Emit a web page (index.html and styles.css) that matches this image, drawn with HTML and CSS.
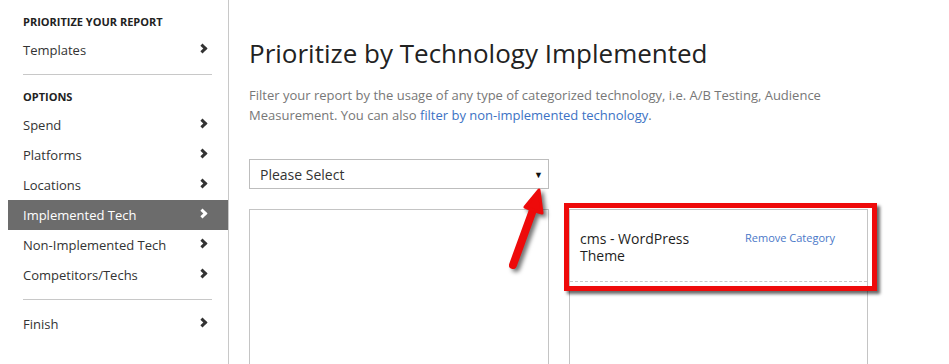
FILE: index.html
```html
<!DOCTYPE html>
<html lang="en">
<head>
    <meta charset="UTF-8">
    <meta name="viewport" content="width=device-width, initial-scale=1.0">
    <title>Prioritize by Technology Implemented</title>
    <link rel="stylesheet" href="styles.css">
</head>
<body>
    <div class="page">
        <div class="sidebar">
            <div class="side-title">PRIORITIZE YOUR REPORT</div>
            <ul class="side-nav">
                <li><span>Templates</span><i class="chev"></i></li>
            </ul>
            <hr class="side-line">
            <div class="side-title">OPTIONS</div>
            <ul class="side-nav">
                <li><span>Spend</span><i class="chev"></i></li>
                <li><span>Platforms</span><i class="chev"></i></li>
                <li><span>Locations</span><i class="chev"></i></li>
                <li class="active"><span>Implemented Tech</span><i class="chev"></i></li>
                <li><span>Non-Implemented Tech</span><i class="chev"></i></li>
                <li><span>Competitors/Techs</span><i class="chev"></i></li>
            </ul>
            <hr class="side-line last">
            <ul class="side-nav">
                <li><span>Finish</span><i class="chev"></i></li>
            </ul>
        </div>

        <div class="main">
            <h1>Prioritize by Technology Implemented</h1>
            <p class="intro">Filter your report by the usage of any type of categorized technology, i.e. A/B Testing, Audience<br>Measurement. You can also <a href="#">filter by non-implemented technology</a>.</p>

            <div class="picker">
                <div class="select">
                    <span>Please Select</span>
                    <span class="caret">&#9660;</span>
                </div>
                <div class="lists">
                    <div class="box"></div>
                    <div class="box chosen">
                        <div class="item">
                            <div class="item-name">cms - WordPress Theme</div>
                            <a class="item-remove" href="#">Remove Category</a>
                        </div>
                        <!-- red callout drawn over the item -->
                        <div class="callout"></div>
                    </div>
                </div>
                <svg class="arrow" width="70" height="100" viewBox="0 0 70 100">
                    <line x1="24" y1="85" x2="44" y2="30" stroke="#ee0a0a" stroke-width="8" stroke-linecap="round"/>
                    <path d="M50 10 L53 33 Q46 31 36 27 Z" fill="#ee0a0a" stroke="#ee0a0a" stroke-width="3" stroke-linejoin="round"/>
                </svg>
            </div>
        </div>
    </div>
</body>
</html>
```

FILE: styles.css
```css
*{
    box-sizing: border-box;
}
body{
    margin: 0;
    font-family: "Open Sans", "Liberation Sans", sans-serif;
    color: #333;
    background-color: #fff;
}
.page{
    display: flex;
    height: 364px;
    overflow: hidden;
}
.sidebar{
    width: 229px;
    flex-shrink: 0;
    border-right: 1px solid #c8c8c8;
    padding-top: 15px;
}
.side-title{
    font-size: 11px;
    font-weight: 700;
    line-height: 14px;
    color: #222;
    padding-left: 23px;
    margin-bottom: 6px;
}
.side-nav{
    list-style: none;
    margin: 0 0 0 8px;
    padding: 0;
}
.side-nav li{
    height: 30px;
    display: flex;
    align-items: center;
    justify-content: space-between;
    padding: 0 20px 0 15px;
    font-size: 13px;
    color: #333;
}
.side-nav li.active{
    background-color: #6c6c6c;
    color: #fff;
}
.chev{
    width: 7px;
    height: 7px;
    border-top: 3px solid #333;
    border-right: 3px solid #333;
    transform: rotate(45deg);
    margin-top: -3px;
    margin-right: 2px;
}
.active .chev{
    border-color: #fff;
}
.side-line{
    margin: 9px 16px 15px 23px;
    border: 0;
    border-top: 1px solid #c8c8c8;
}
.side-line.last{
    margin-bottom: 9px;
}
.main{
    flex: 1;
    padding: 33px 0 0 20px;
}
h1{
    margin: 0;
    font-size: 26px;
    font-weight: 400;
    line-height: 40px;
    color: #222;
}
.intro{
    margin: 12px 0 0 0;
    max-width: 620px;
    font-size: 13px;
    line-height: 20px;
    color: #777;
}
.intro a{
    color: #3c72c4;
    text-decoration: none;
}
.picker{
    position: relative;
    margin-top: 34px;
}
.select{
    width: 300px;
    height: 30px;
    border: 1px solid #bdbdbd;
    display: flex;
    align-items: center;
    justify-content: space-between;
    padding: 0 5px 0 10px;
    font-size: 14px;
    color: #333;
}
.caret{
    font-size: 9px;
    color: #111;
}
.lists{
    display: flex;
    gap: 20px;
    margin-top: 20px;
}
.box{
    width: 300px;
    height: 220px;
    border: 1px solid #c4c4c4;
}
.chosen{
    position: relative;
    width: 299px;
}
.item{
    display: flex;
    padding: 20px 10px 17px 10px;
    border-bottom: 1px dashed #c8c8c8;
}
.item-name{
    width: 165px;
    font-size: 14px;
    line-height: 17px;
    color: #1e1e1e;
    padding-right: 40px;
}
.item-remove{
    margin-top: -1px;
    font-size: 11px;
    line-height: 17px;
    color: #4a78c8;
    text-decoration: none;
}
.callout{
    position: absolute;
    left: -6px;
    top: -7px;
    width: 313px;
    height: 88px;
    border: 5px solid #ee0a0a;
    box-shadow: 3px 3px 3px rgba(0, 0, 0, 0.6);
}
.arrow{
    position: absolute;
    left: 240px;
    top: 21px;
    filter: drop-shadow(3px 3px 2px rgba(0, 0, 0, 0.55));
}
```
